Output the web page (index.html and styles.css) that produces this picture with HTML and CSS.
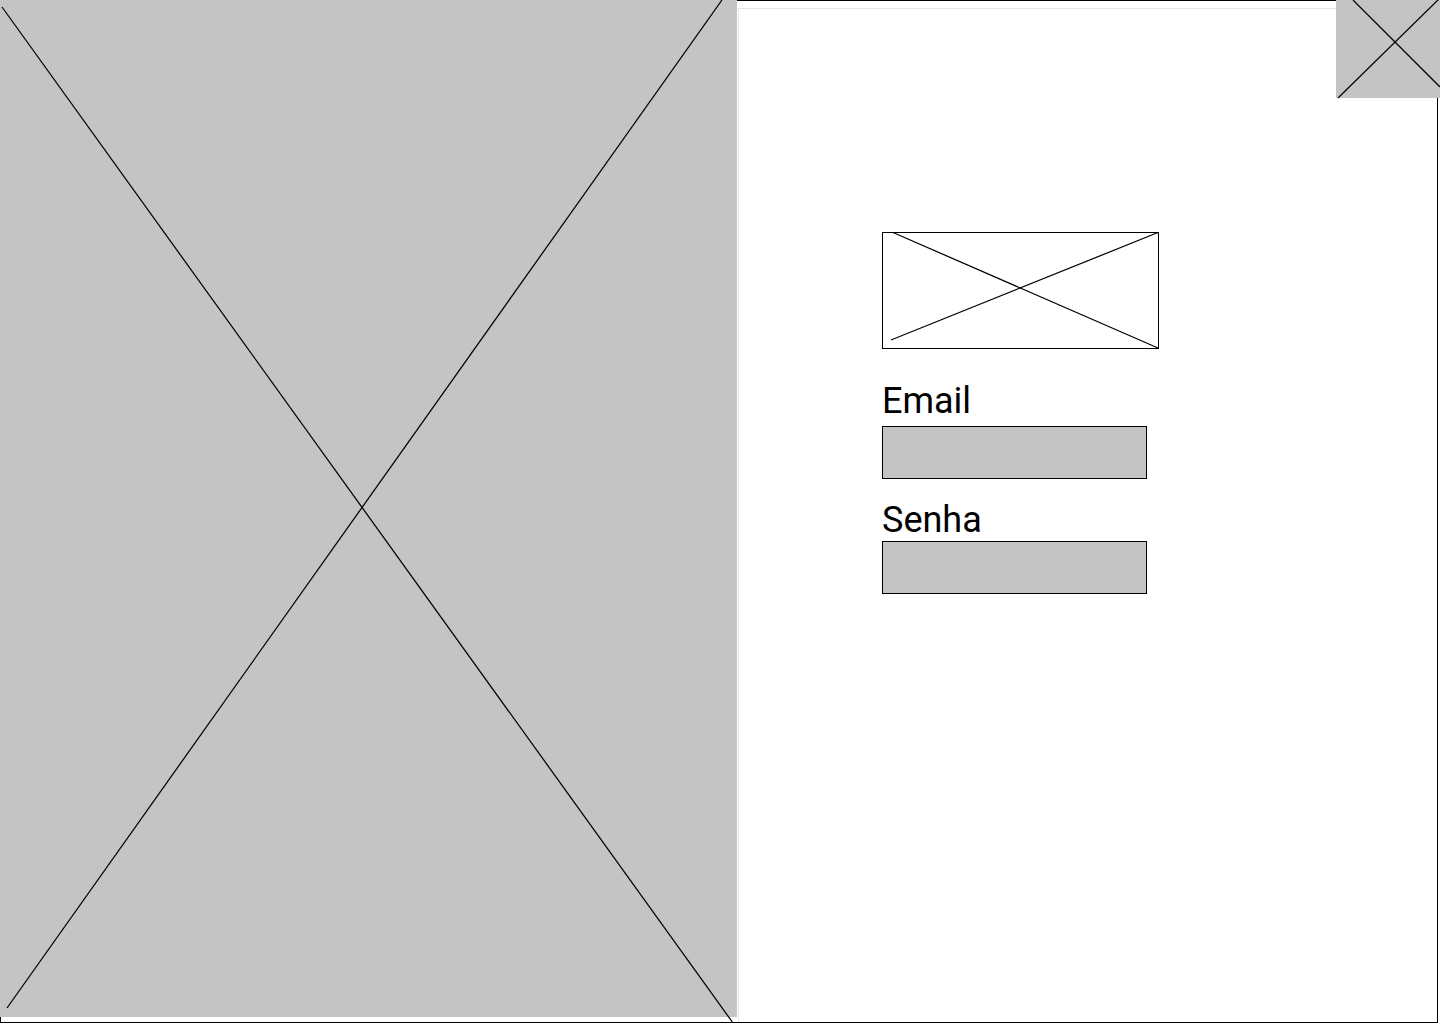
FILE: index.html
```html
<!DOCTYPE html>
<html lang="pt-BR">
<head>
<meta charset="utf-8">
<title>Login</title>
<link rel="stylesheet" href="styles.css">
</head>
<body>
<div class="frame">
  <div class="hero">
    <svg class="hero-x" width="737" height="1017" viewBox="0 0 737 1017">
      <line x1="2" y1="7" x2="733" y2="1023" />
      <line x1="722" y1="0" x2="7" y2="1008" />
    </svg>
  </div>
  <div class="panel">
    <div class="logo">
      <svg width="277" height="117" viewBox="0 0 277 117">
        <line x1="11" y1="0.5" x2="276" y2="116" />
        <line x1="9" y1="108" x2="276" y2="0.5" />
      </svg>
    </div>
    <label class="label label-email" for="email">Email</label>
    <div class="field field-email" id="email"></div>
    <label class="label label-senha" for="senha">Senha</label>
    <div class="field" id="senha"></div>
  </div>
  <div class="corner">
    <svg width="104" height="98" viewBox="0 0 104 98">
      <line x1="17" y1="0" x2="104" y2="87" />
      <line x1="2" y1="98" x2="104" y2="-2" />
    </svg>
  </div>
</div>
</body>
</html>
```
FILE: styles.css
```css
* {
  box-sizing: border-box;
}

html, body {
  margin: 0;
  padding: 0;
  background: #ffffff;
}

body {
  width: 1440px;
  height: 1024px;
  overflow: hidden;
  font-family: Roboto, "Liberation Sans", sans-serif;
  color: #000;
}

.frame {
  position: relative;
  width: 1438px;
  height: 1023px;
  border: 1px solid #000;
  display: flex;
  align-items: flex-start;
}

.hero {
  position: relative;
  flex: 0 0 737px;
  height: 1017px;
  margin: -1px 0 0 -1px;
  background: #c4c4c4;
}

.hero-x {
  position: absolute;
  left: 0;
  top: 0;
  overflow: visible;
}

.hero-x line,
.logo line,
.corner line {
  stroke: #000;
  stroke-width: 1.25;
}

.panel {
  flex: 1 1 auto;
  align-self: stretch;
  margin: 7px 0 0 1px;
  border-left: 1px solid #e6e6e6;
  border-top: 1px solid #e6e6e6;
  padding: 223px 0 0 143px;
  display: flex;
  flex-direction: column;
  align-items: flex-start;
}

.logo {
  width: 277px;
  height: 117px;
  border: 1px solid #000;
  position: relative;
}

.logo svg {
  position: absolute;
  left: -1px;
  top: -1px;
  overflow: visible;
}

.label {
  display: block;
  font-size: 36px;
  line-height: 42px;
  font-weight: 400;
}

.label-email {
  margin-top: 31px;
}

.label-senha {
  margin-top: 20px;
}

.field {
  width: 265px;
  height: 53px;
  background: #c4c4c4;
  border: 1px solid #000;
}

.field-email {
  margin-top: 4px;
}

.corner {
  position: absolute;
  top: -1px;
  right: -3px;
  width: 104px;
  height: 98px;
  background: #c4c4c4;
}

.corner svg {
  display: block;
  overflow: visible;
}
```
